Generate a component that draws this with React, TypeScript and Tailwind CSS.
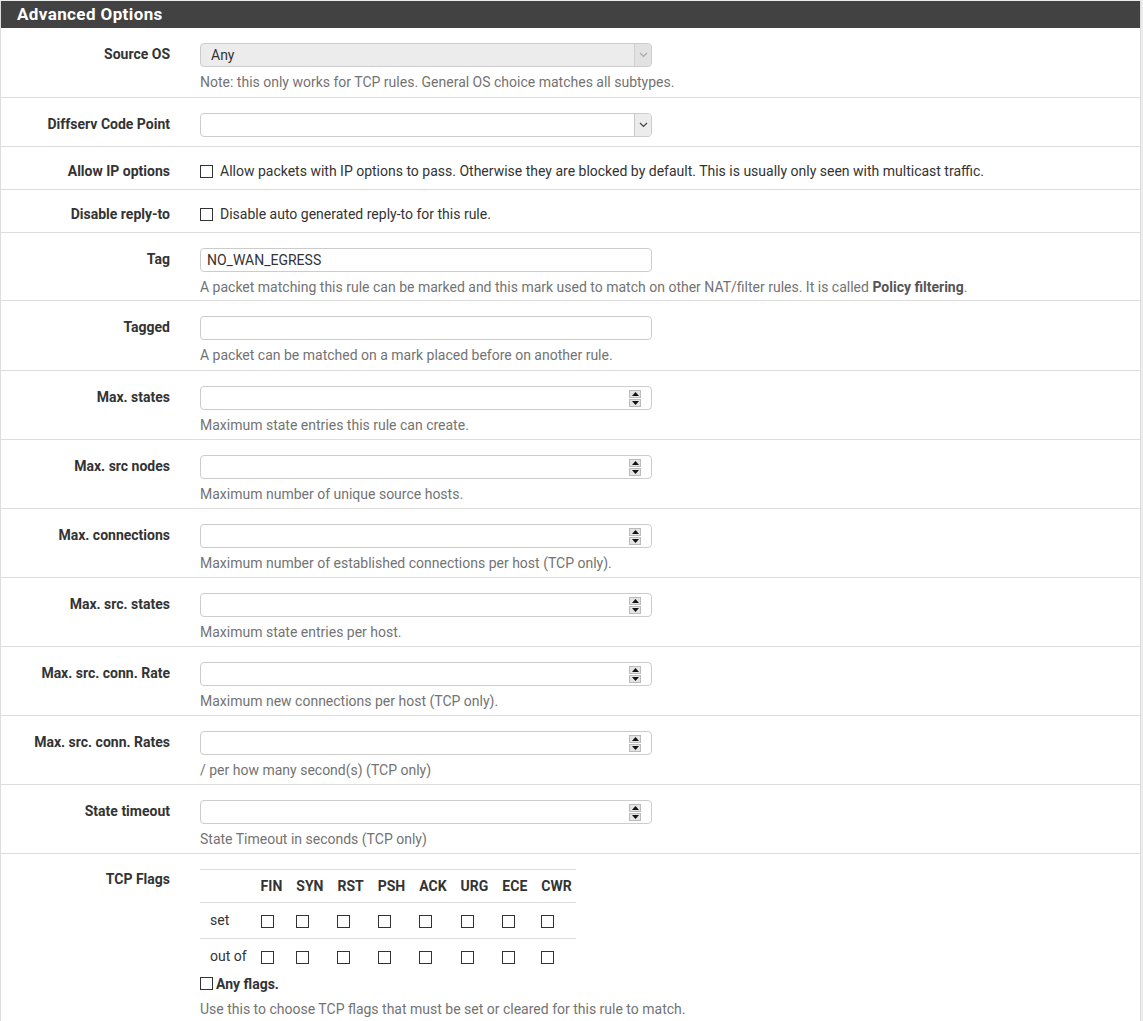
import React from 'react';

const labelCls = 'w-[169px] shrink-0 text-right font-bold text-[14px] leading-[20px] text-[#333]';
const helpCls = 'mt-[5px] text-[14px] leading-[20px] text-[#737373]';

function Checkbox() {
  return <span className="inline-block w-[13px] h-[13px] border border-[#333] bg-white align-middle" />;
}

function Spinner() {
  return (
    <div className="flex flex-col gap-px mr-[10px]">
      <div className="w-[12px] h-[8px] bg-[#e4e4e4] border border-[#bbb] flex items-center justify-center">
        <svg width="7" height="4" viewBox="0 0 7 4"><path d="M0 4 L3.5 0 L7 4 Z" fill="#111" /></svg>
      </div>
      <div className="w-[12px] h-[8px] bg-[#e4e4e4] border border-[#bbb] flex items-center justify-center">
        <svg width="7" height="4" viewBox="0 0 7 4"><path d="M0 0 L3.5 4 L7 0 Z" fill="#111" /></svg>
      </div>
    </div>
  );
}

function TextInput({ value = '', number = false }: { value?: string; number?: boolean }) {
  return (
    <div className="w-[452px] h-[24px] border border-[#ccc] rounded-[4px] bg-white flex items-center justify-between">
      <span className="pl-[6px] text-[14px] text-[#333]">{value}</span>
      {number && <Spinner />}
    </div>
  );
}

function Select({ value = '', disabled = false }: { value?: string; disabled?: boolean }) {
  return (
    <div className={`w-[452px] h-[24px] border border-[#ccc] rounded-[4px] flex items-stretch justify-between overflow-hidden ${disabled ? 'bg-[#ececec]' : 'bg-white'}`}>
      <span className="pl-[10px] text-[14px] leading-[22px] text-[#333]">{value}</span>
      <div className={`w-[17px] flex items-center justify-center border-l ${disabled ? 'bg-[#e2e2e2] border-[#d0d0d0]' : 'bg-[#ececec] border-[#c8c8c8]'}`}>
        <svg width="9" height="6" viewBox="0 0 9 6">
          <path d="M1 1 L4.5 4.5 L8 1" fill="none" stroke={disabled ? '#aaa' : '#444'} strokeWidth="1.2" />
        </svg>
      </div>
    </div>
  );
}

function Row({ label, children, help, pb = 'pb-[4px]' }: { label: string; children: React.ReactNode; help?: React.ReactNode; pb?: string }) {
  return (
    <div className={`flex gap-[30px] pt-[15px] ${pb} border-b border-[#ddd]`}>
      <div className={`${labelCls} mt-px`}>{label}</div>
      <div>
        {children}
        {help && <div className={helpCls}>{help}</div>}
      </div>
    </div>
  );
}

function CheckRow({ label, text }: { label: string; text: string }) {
  return (
    <div className="flex gap-[30px] pt-[14px] pb-[8px] border-b border-[#ddd]">
      <div className={labelCls}>{label}</div>
      <div className="flex items-center gap-[7px] text-[14px] leading-[20px] text-[#333]">
        <Checkbox />
        <span>{text}</span>
      </div>
    </div>
  );
}

const numberRows = [
  ['Max. states', 'Maximum state entries this rule can create.'],
  ['Max. src nodes', 'Maximum number of unique source hosts.'],
  ['Max. connections', 'Maximum number of established connections per host (TCP only).'],
  ['Max. src. states', 'Maximum state entries per host.'],
  ['Max. src. conn. Rate', 'Maximum new connections per host (TCP only).'],
  ['Max. src. conn. Rates', '/ per how many second(s) (TCP only)'],
  ['State timeout', 'State Timeout in seconds (TCP only)'],
];

const flags = ['FIN', 'SYN', 'RST', 'PSH', 'ACK', 'URG', 'ECE', 'CWR'];

export default function App() {
  return (
    <div className="min-h-screen bg-[#ececec] pt-px font-['Roboto',sans-serif]">
      <div className="w-[1141px] bg-white border-l border-r border-[#ddd]">
        <div className="h-[27px] bg-[#424242] pl-[16px] flex items-center text-white font-bold text-[17px] tracking-[0.4px]">
          Advanced Options
        </div>

        <Row label="Source OS" pb="pb-[5px]" help="Note: this only works for TCP rules. General OS choice matches all subtypes.">
          <Select value="Any" disabled />
        </Row>
        <Row label="Diffserv Code Point" pb="pb-[9px]">
          <Select />
        </Row>
        <CheckRow label="Allow IP options" text="Allow packets with IP options to pass. Otherwise they are blocked by default. This is usually only seen with multicast traffic." />
        <CheckRow label="Disable reply-to" text="Disable auto generated reply-to for this rule." />
        <Row
          label="Tag"
          pb="pb-[3px]"
          help={<>A packet matching this rule can be marked and this mark used to match on other NAT/filter rules. It is called <b className="text-[#555]">Policy filtering</b>.</>}
        >
          <TextInput value="NO_WAN_EGRESS" />
        </Row>
        <Row label="Tagged" help="A packet can be matched on a mark placed before on another rule." pb="pb-[5px]">
          <TextInput />
        </Row>
        {numberRows.map(([label, help]) => (
          <Row key={label} label={label} help={help}>
            <TextInput number />
          </Row>
        ))}

        <div className="flex gap-[30px] pt-[15px] pb-[4px]">
          <div className={labelCls}>TCP Flags</div>
          <div>
            <table className="border-collapse text-[14px] text-[#333] whitespace-nowrap">
              <thead>
                <tr className="border-t border-b border-[#ddd] h-[33px]">
                  <th className="pl-[10px] pr-[7px]"></th>
                  {flags.map((f, i) => (
                    <th key={f} className={`pl-[7px] text-left font-bold ${i === flags.length - 1 ? 'pr-[4px]' : 'pr-[7px]'}`}>{f}</th>
                  ))}
                </tr>
              </thead>
              <tbody>
                <tr className="border-b border-[#ddd] h-[36px]">
                  <td className="pl-[10px] pr-[7px]">set</td>
                  {flags.map((f, i) => (
                    <td key={f} className={`pl-[7px] ${i === flags.length - 1 ? 'pr-[4px]' : 'pr-[7px]'}`}><Checkbox /></td>
                  ))}
                </tr>
                <tr className="h-[35px]">
                  <td className="pl-[10px] pr-[7px]">out of</td>
                  {flags.map((f, i) => (
                    <td key={f} className={`pl-[7px] ${i === flags.length - 1 ? 'pr-[4px]' : 'pr-[7px]'}`}><Checkbox /></td>
                  ))}
                </tr>
              </tbody>
            </table>
            <div className="flex items-center gap-[3px] text-[14px] leading-[20px] font-bold text-[#333]">
              <Checkbox />
              <span>Any flags.</span>
            </div>
            <div className={helpCls}>Use this to choose TCP flags that must be set or cleared for this rule to match.</div>
          </div>
        </div>
      </div>
    </div>
  );
}
